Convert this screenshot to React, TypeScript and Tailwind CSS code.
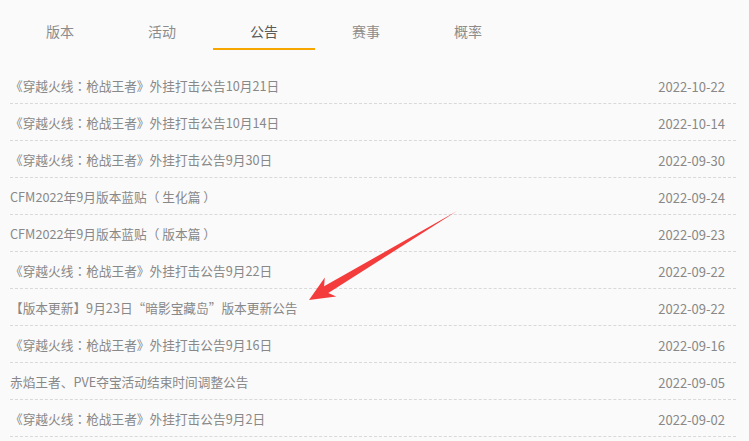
import React, { useState } from 'react';

const tabs = ['版本', '活动', '公告', '赛事', '概率'];

const notices = [
  { title: '《穿越火线：枪战王者》外挂打击公告10月21日', date: '2022-10-22' },
  { title: '《穿越火线：枪战王者》外挂打击公告10月14日', date: '2022-10-14' },
  { title: '《穿越火线：枪战王者》外挂打击公告9月30日', date: '2022-09-30' },
  { title: 'CFM2022年9月版本蓝贴（ 生化篇 ）', date: '2022-09-24' },
  { title: 'CFM2022年9月版本蓝贴（ 版本篇 ）', date: '2022-09-23' },
  { title: '《穿越火线：枪战王者》外挂打击公告9月22日', date: '2022-09-22' },
  { title: '【版本更新】9月23日“暗影宝藏岛”版本更新公告', date: '2022-09-22' },
  { title: '《穿越火线：枪战王者》外挂打击公告9月16日', date: '2022-09-16' },
  { title: '赤焰王者、PVE夺宝活动结束时间调整公告', date: '2022-09-05' },
  { title: '《穿越火线：枪战王者》外挂打击公告9月2日', date: '2022-09-02' },
];

// the full-width colon sits centred in the original font, TC draws it that way
const renderTitle = (title: string) => {
  const parts = title.split('：');
  return parts.map((part, i) => (
    <React.Fragment key={i}>
      {part}
      {i < parts.length - 1 && (
        <span style={{ fontFamily: '"Noto Sans CJK TC", sans-serif' }}>：</span>
      )}
    </React.Fragment>
  ));
};

const App: React.FC = () => {
  const [active, setActive] = useState(2);

  return (
    <div
      className="relative w-[749px] h-[441px] overflow-hidden bg-[#fafafa]"
      style={{ fontFamily: '"Noto Sans CJK SC", "Noto Sans", sans-serif' }}
    >
      {/* Tabs */}
      <div className="flex pl-[9px]">
        {tabs.map((tab, i) => (
          <button
            key={tab}
            type="button"
            onClick={() => setActive(i)}
            className={
              i === active
                ? 'w-[102px] h-[50px] pt-[14px] flex items-center justify-center border-b-2 border-[#f7a600] text-[14px] leading-none text-[#5a5a5a]'
                : 'w-[102px] h-[50px] pt-[14px] flex items-center justify-center border-b-2 border-transparent text-[14px] leading-none text-[#8c8c8c]'
            }
          >
            {tab}
          </button>
        ))}
      </div>

      {/* Notice list */}
      <ul className="mt-[17px] ml-[10px] w-[726px]">
        {notices.map((n, i) => (
          <li
            key={i}
            className="h-[37px] pt-[2px] flex items-center justify-between pr-[11px] border-b border-dashed border-[#d9d9d9] text-[12.7px] leading-none text-[#888888]"
          >
            <span>{renderTitle(n.title)}</span>
            <span className="text-[13px]">{n.date}</span>
          </li>
        ))}
      </ul>

      {/* Red annotation arrow */}
      <svg className="absolute left-0 top-0 pointer-events-none" width="749" height="441">
        <polygon
          points="457,211 328.3,293.1 336.2,296.5 309,300 324.8,277.6 324.1,286.3"
          fill="#f53c3c"
        />
      </svg>
    </div>
  );
};

export default App;
